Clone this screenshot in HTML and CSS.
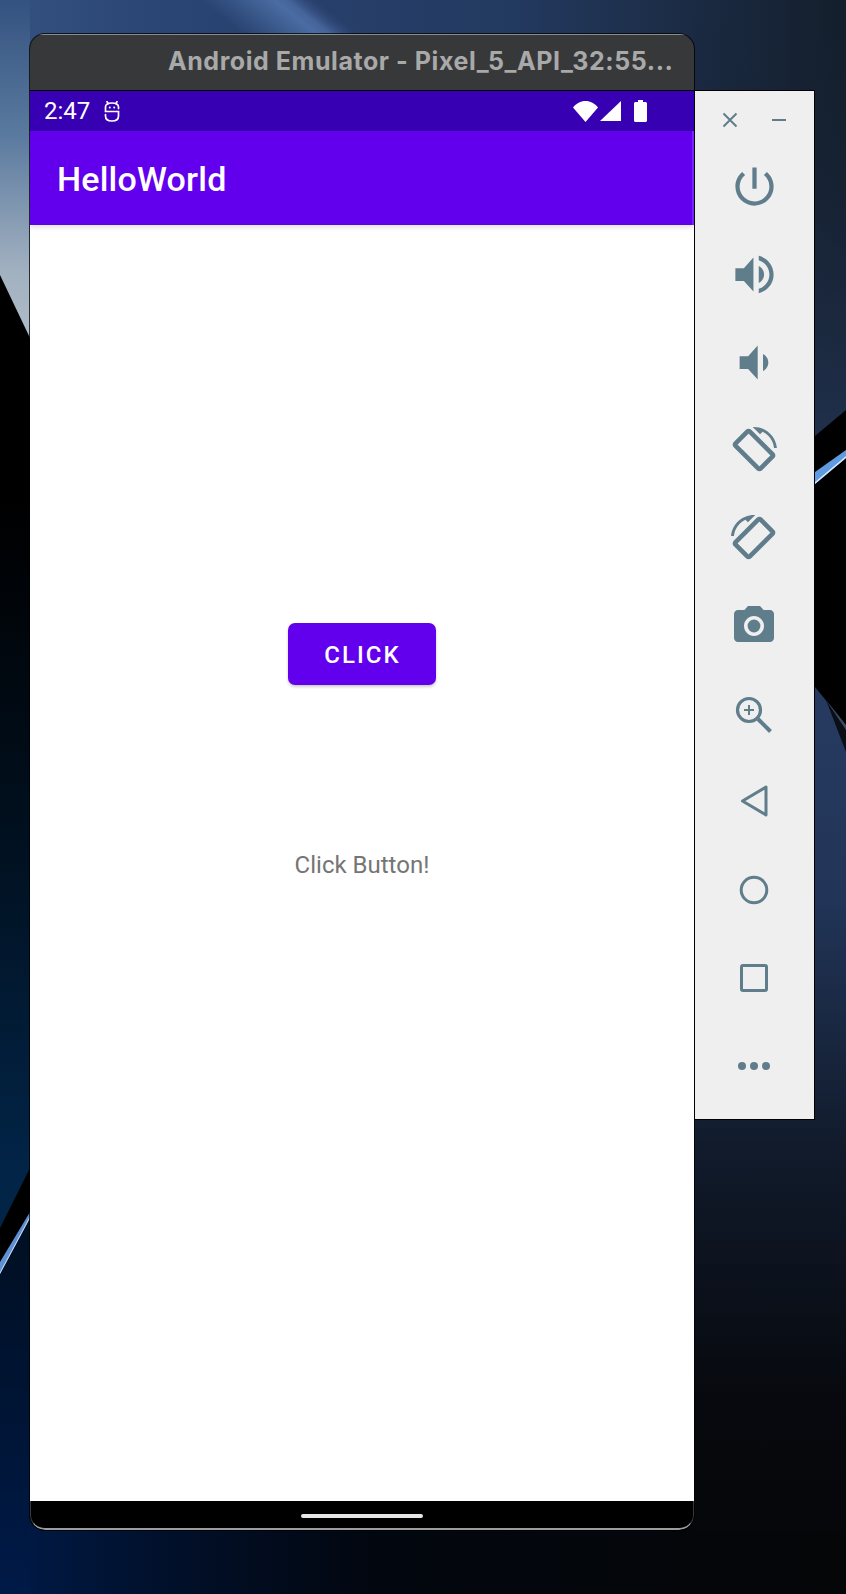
FILE: index.html
```html
<!DOCTYPE html>
<html lang="en">
<head>
<meta charset="utf-8">
<title>Android Emulator</title>
<link rel="stylesheet" href="styles.css">
</head>
<body>
<div class="stage">
  <svg class="wallpaper" viewBox="0 0 846 1594" width="846" height="1594" aria-hidden="true">
    <defs>
      <linearGradient id="top" gradientUnits="userSpaceOnUse" x1="0" y1="0" x2="846" y2="0">
        <stop offset="0" stop-color="#34527f"/><stop offset=".2" stop-color="#2a4474"/>
        <stop offset=".6" stop-color="#233a60"/><stop offset="1" stop-color="#141e2c"/>
      </linearGradient>
      <linearGradient id="glow" gradientUnits="userSpaceOnUse" x1="215" y1="40" x2="283" y2="-46">
        <stop offset=".2" stop-color="#4a6ca3" stop-opacity="0"/><stop offset=".62" stop-color="#4a6ca3"/>
        <stop offset=".7" stop-color="#446399"/><stop offset=".86" stop-color="#33477a" stop-opacity="0"/>
      </linearGradient>
      <linearGradient id="leftTop" x1="0" y1="0" x2="0" y2="1">
        <stop offset="0" stop-color="#34527f"/><stop offset=".4" stop-color="#5b7a9f"/>
        <stop offset=".8" stop-color="#a2b1c0"/><stop offset="1" stop-color="#b0bcc8"/>
      </linearGradient>
      <linearGradient id="rightTop" x1="0" y1="0" x2="0" y2="1">
        <stop offset="0" stop-color="#15202e" stop-opacity="0"/><stop offset="1" stop-color="#20304c"/>
      </linearGradient>
      <linearGradient id="leftBlack" gradientUnits="userSpaceOnUse" x1="0" y1="500" x2="0" y2="1170">
        <stop offset="0" stop-color="#000"/><stop offset=".5" stop-color="#01101f"/>
        <stop offset="1" stop-color="#022447"/>
      </linearGradient>
      <linearGradient id="leftLow" gradientUnits="userSpaceOnUse" x1="0" y1="1230" x2="0" y2="1594">
        <stop offset="0" stop-color="#000f22"/><stop offset="1" stop-color="#001a48"/>
      </linearGradient>
      <linearGradient id="rightLow" gradientUnits="userSpaceOnUse" x1="0" y1="700" x2="0" y2="1594">
        <stop offset="0" stop-color="#263a60"/><stop offset=".22" stop-color="#223558"/>
        <stop offset=".5" stop-color="#111b2c"/><stop offset=".78" stop-color="#07090e"/><stop offset="1" stop-color="#050608"/>
      </linearGradient>
      <linearGradient id="bottom" gradientUnits="userSpaceOnUse" x1="0" y1="0" x2="846" y2="0">
        <stop offset="0" stop-color="#001a48"/><stop offset=".2" stop-color="#01102a"/>
        <stop offset=".45" stop-color="#02060e"/><stop offset="1" stop-color="#050608"/>
      </linearGradient>
    </defs>
    <rect width="846" height="500" fill="url(#top)"/>
    <rect x="150" y="0" width="270" height="34" fill="url(#glow)"/>
    <rect x="0" y="0" width="30" height="340" fill="url(#leftTop)"/>
    <rect x="694" y="0" width="152" height="440" fill="url(#rightTop)"/>
    <rect x="0" y="500" width="846" height="1094" fill="url(#bottom)"/>
    <rect x="694" y="680" width="152" height="914" fill="url(#rightLow)"/>
    <rect x="0" y="1530" width="846" height="64" fill="url(#bottom)"/>
    <polygon points="0,275 30,338 30,1300 0,1300" fill="url(#leftBlack)"/>
    <polygon points="0,1228 30,1168 30,1225 0,1280" fill="#000"/>
    <polygon points="0,1274 30,1217 30,1300 0,1300" fill="url(#leftLow)"/>
    <rect x="0" y="1300" width="30" height="294" fill="url(#leftLow)"/>
    <polygon points="0,1262 30,1212 30,1218 0,1274" fill="#5c8fd4"/>
    <polygon points="0,1272 30,1216 30,1218 0,1274" fill="#c9d9ee"/>
    <polygon points="815,436 846,410 846,725 815,687" fill="#000"/>
    <polygon points="815,472 846,450 846,458 815,484" fill="#5f9be0"/>
    <polygon points="815,482 846,456 846,458 815,484" fill="#d7e6f7"/>
    <polygon points="826,700 846,725 846,752" fill="#0a0e16"/>
    <polygon points="826,700 846,725 846,730" fill="#3c4a60"/>
  </svg>

  <div class="desktop">
    <main class="window">
      <header class="titlebar">Android Emulator - Pixel_5_API_32:55...</header>
      <div class="statusbar">
        <span class="clock">2:47</span>
        <svg class="debug-icon" viewBox="0 0 16 21" width="16" height="21" aria-hidden="true">
          <path d="M14.500 7.500V6C14.500 3.200 11.800 2 8 2S1.500 3.200 1.500 6v4.500h13V15C14.500 18.500 11.800 20 8 20s-6.500-1.500-6.500-5v-1.500M3 .5l1 2.500M13 .5l-1 2.500" fill="none" stroke="#fff" stroke-width="1.700" stroke-linecap="round"/>
          <circle cx="5.800" cy="6.500" r="1" fill="#fff"/><circle cx="10.200" cy="6.500" r="1" fill="#fff"/>
        </svg>
        <div class="status-right">
          <svg viewBox="0 0 25 21" width="25" height="21" aria-hidden="true"><path d="M0 6.500C3.200 2.500 7.600 0 12.500 0S21.800 2.500 25 6.500L12.500 21z" fill="#fff"/></svg>
          <svg class="signal" viewBox="0 0 21 20" width="21" height="20" aria-hidden="true"><path d="M21 0v20H0z" fill="#fff"/></svg>
          <svg class="battery" viewBox="0 0 13 22" width="13" height="22" aria-hidden="true"><path d="M4 0h5v2h2.500c.8 0 1.500.7 1.500 1.500v17c0 .8-.7 1.500-1.500 1.500h-10C.7 22 0 21.300 0 20.500v-17C0 2.700.7 2 1.500 2H4z" fill="#fff"/></svg>
        </div>
      </div>
      <div class="appbar">HelloWorld</div>
      <div class="content">
        <button class="click-btn" type="button">CLICK</button>
        <p class="message">Click Button!</p>
      </div>
      <div class="navbar"><span class="pill"></span></div>
    </main>

    <aside class="sidebar">
      <div class="win-controls">
        <svg viewBox="0 0 16 16" width="16" height="16" aria-hidden="true"><path d="M1.500 1.500l13 13M14.500 1.500l-13 13" class="line"/></svg>
        <svg viewBox="0 0 16 16" width="16" height="16" aria-hidden="true"><path d="M1 8h14" class="line"/></svg>
      </div>
      <div class="tool"><svg viewBox="0 0 24 24" class="icon big"><path d="M13 3h-2v10h2V3zm4.830 2.170l-1.420 1.420C17.990 7.860 19 9.810 19 12c0 3.870-3.130 7-7 7s-7-3.130-7-7c0-2.190 1.010-4.140 2.580-5.420L6.170 5.170C4.230 6.820 3 9.260 3 12c0 4.970 4.030 9 9 9s9-4.030 9-9c0-2.740-1.230-5.180-3.170-6.830z"/></svg></div>
      <div class="tool"><svg viewBox="0 0 24 24" class="icon big"><path d="M3 9v6h4l4.500 5V4L7 9H3zm13.500 3c0-1.770-1.020-3.290-2.500-4.030v8.050c1.480-.73 2.500-2.250 2.500-4.020zM14 3.230v2.060c2.890.86 5 3.540 5 6.710s-2.110 5.850-5 6.710v2.060c4.010-.91 7-4.490 7-8.770s-2.990-7.860-7-8.770z"/></svg></div>
      <div class="tool"><svg viewBox="0 0 24 24" class="icon big"><path d="M18.500 12c0-1.770-1.020-3.290-2.500-4.030v8.050c1.480-.73 2.500-2.250 2.500-4.020zM5 9v6h4l4.500 5V4L9 9H5z"/></svg></div>
      <div class="tool"><svg viewBox="0 0 24 24" class="icon rot"><path d="M16.480 2.520c3.270 1.550 5.610 4.720 5.970 8.480h1.500C23.440 4.840 18.290 0 12 0l-.66.030 3.810 3.810 1.330-1.320z"/><path class="phone" d="M10.230 1.750c-.59-.59-1.540-.59-2.120 0L1.750 8.110c-.59.590-.59 1.540 0 2.120l12.020 12.020c.59.590 1.540.59 2.120 0l6.360-6.360c.59-.59.590-1.540 0-2.120L10.230 1.750zm4.600 19.440L2.810 9.170l6.360-6.360 12.020 12.020-6.360 6.360z"/></svg></div>
      <div class="tool"><svg viewBox="0 0 24 24" class="icon rot mirror"><path d="M16.480 2.520c3.270 1.550 5.610 4.720 5.970 8.480h1.500C23.440 4.840 18.290 0 12 0l-.66.030 3.810 3.810 1.330-1.320z"/><path class="phone" d="M10.230 1.750c-.59-.59-1.540-.59-2.120 0L1.750 8.110c-.59.590-.59 1.540 0 2.120l12.020 12.020c.59.590 1.540.59 2.120 0l6.360-6.360c.59-.59.590-1.540 0-2.120L10.230 1.750zm4.600 19.440L2.810 9.170l6.360-6.360 12.020 12.020-6.360 6.360z"/></svg></div>
      <div class="tool"><svg viewBox="0 0 24 24" class="icon cam"><path d="M9 2L7.170 4H4c-1.100 0-2 .9-2 2v12c0 1.100.9 2 2 2h16c1.100 0 2-.9 2-2V6c0-1.100-.9-2-2-2h-3.170L15 2H9zm3 15c-2.760 0-5-2.240-5-5s2.240-5 5-5 5 2.240 5 5-2.240 5-5 5z"/><circle cx="12" cy="12" r="3.200"/></svg></div>
      <div class="tool"><svg viewBox="0 0 48 48" class="outline"><circle cx="19" cy="20" r="11.500" stroke-width="3.200"/><path d="M14 20h10M19 15v10" stroke-width="2"/><path d="M28 29l12.500 12.500" stroke-width="4"/></svg></div>
      <div class="tool"><svg viewBox="0 0 48 48" class="outline"><path d="M12.500 23L36 9v28z" stroke-width="3" stroke-linejoin="round"/></svg></div>
      <div class="tool"><svg viewBox="0 0 48 48" class="outline"><circle cx="24" cy="24" r="12.800" stroke-width="3"/></svg></div>
      <div class="tool"><svg viewBox="0 0 48 48" class="outline"><rect x="11.500" y="11.500" width="25" height="25" rx="1.500" stroke-width="3"/></svg></div>
      <div class="tool"><svg viewBox="0 0 48 48" class="dots"><circle cx="12" cy="24" r="4"/><circle cx="24" cy="24" r="4"/><circle cx="36" cy="24" r="4"/></svg></div>
    </aside>
  </div>
</div>
</body>
</html>
```

FILE: styles.css
```css
* { box-sizing: border-box; }
html, body { margin: 0; padding: 0; background: #000; }

.stage {
  position: relative;
  width: 846px;
  height: 1594px;
  overflow: hidden;
}
.wallpaper { position: absolute; left: 0; top: 0; display: block; }

.desktop {
  position: relative;
  display: flex;
  align-items: flex-start;
  padding: 34px 0 0 30px;
}

.window {
  width: 664px;
  height: 1496px;
  display: flex;
  flex-direction: column;
  border-radius: 15px;
  overflow: hidden;
  background: #000;
  box-shadow: 0 0 0 1px rgba(0,0,0,.75);
}
.titlebar {
  flex: 0 0 57px;
  padding: 8px 0 0 138px;
  background: #37383a;
  border-top: 1px solid #8c8c8c;
  border-bottom: 1px solid #000;
  color: #a9a9a9;
  font: 700 25px/36px Inter, sans-serif;
  letter-spacing: .56px;
  white-space: nowrap;
}
.statusbar {
  flex: 0 0 40px;
  display: flex;
  align-items: center;
  padding-left: 14px;
  background: #3700b3;
  color: #fff;
}
.clock { font: 400 24px/30px Roboto, sans-serif; width: 46px; }
.debug-icon { margin-left: 14px; display: block; }
.status-right {
  margin-left: auto;
  margin-right: 47px;
  display: flex;
  align-items: center;
  gap: 2px;
}
.status-right svg { display: block; }
.status-right .battery { margin-left: 11px; }

.appbar {
  flex: 0 0 94px;
  padding: 26px 0 0 27px;
  background: #6200ee;
  border-right: 2px solid #7a22ff;
  color: #fff;
  font: 500 34px/44px Roboto, sans-serif;
  letter-spacing: .2px;
  box-shadow: 0 2px 5px rgba(0,0,0,.14);
  position: relative;
}
.content {
  flex: 1;
  background: #fff;
  display: flex;
  flex-direction: column;
  align-items: center;
  padding-top: 398px;
}
.click-btn {
  width: 148px;
  height: 62px;
  padding: 2px 0 0 1px;
  border: 0;
  border-radius: 7px;
  background: #6200ee;
  color: #fff;
  font: 500 24px/28px Roboto, sans-serif;
  letter-spacing: 2px;
  box-shadow: 0 2px 3px rgba(0,0,0,.2);
}
.message {
  margin: 164px 0 0;
  color: #757575;
  font: 400 24px/32px Roboto, sans-serif;
}
.navbar {
  flex: 0 0 29px;
  display: flex;
  justify-content: center;
  padding-top: 13px;
  background: #000;
  border: 1px solid #3a3a3a;
  border-top: 0;
  border-bottom: 2px solid #9c9c9c;
  border-radius: 0 0 15px 15px;
}
.pill { width: 122px; height: 4px; border-radius: 2px; background: #e6e6e6; }

.sidebar {
  width: 121px;
  height: 1030px;
  margin-top: 56px;
  background: #efefef;
  border: 1px solid #000;
}
.win-controls {
  height: 51px;
  display: flex;
  justify-content: space-between;
  padding: 21px 27px 0 27px;
  align-items: flex-start;
}
.win-controls svg { display: block; }
.line { stroke: #607d8b; stroke-width: 2; fill: none; }
.tool {
  height: 88px;
  display: flex;
  align-items: center;
  justify-content: center;
  padding-right: 1px;
}
.tool svg { display: block; width: 48px; height: 48px; }
.icon { fill: #607d8b; }
.tool .big { width: 51px; height: 51px; }
.tool .rot { width: 46px; height: 46px; }
.phone { stroke: #607d8b; stroke-width: .9; }
.mirror { transform: scaleX(-1); }
.outline { fill: none; stroke: #607d8b; }
.dots { fill: #607d8b; }
```
